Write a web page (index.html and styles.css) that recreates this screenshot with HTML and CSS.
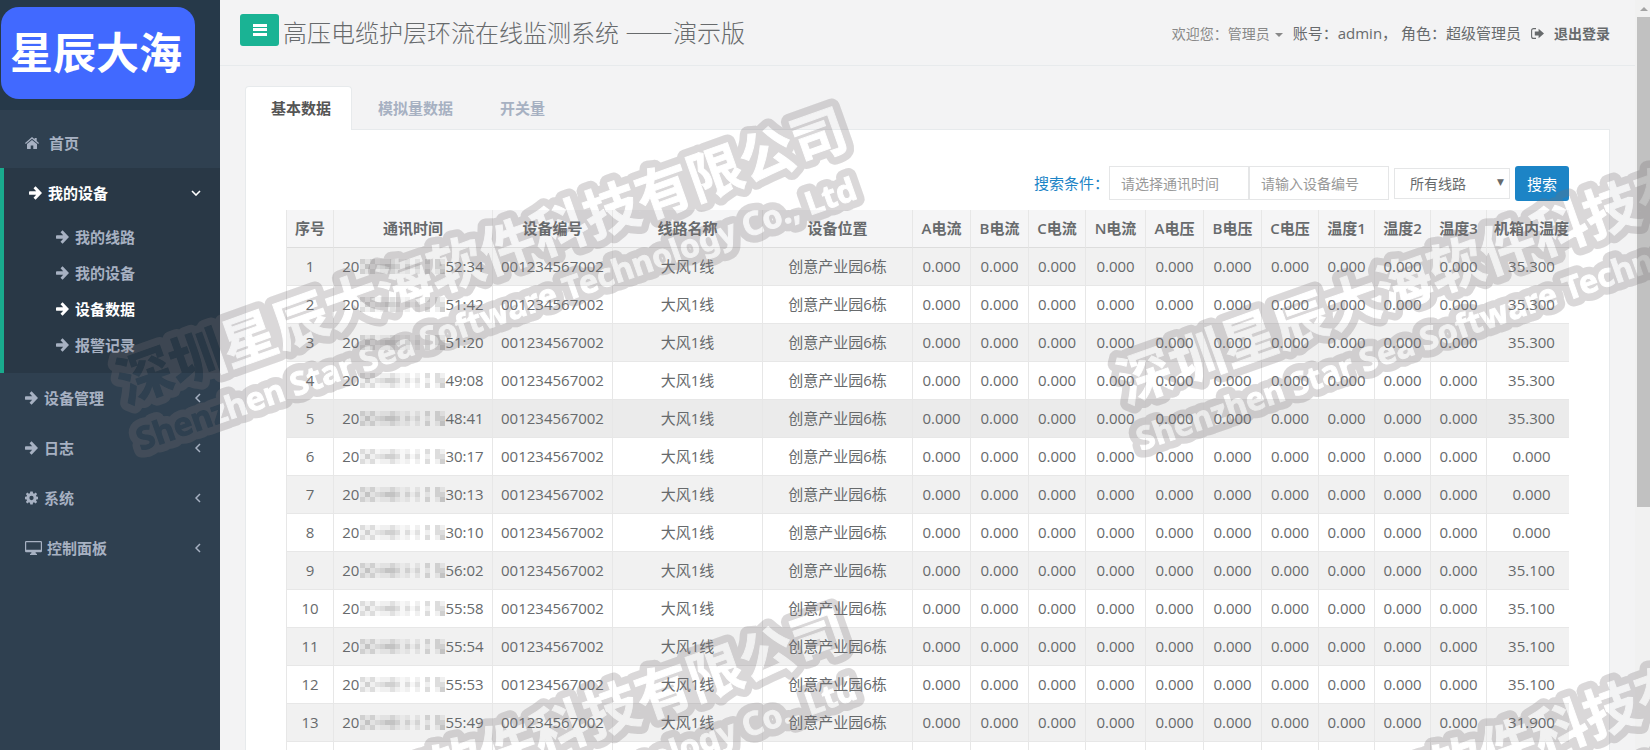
FILE: index.html
```html
<!DOCTYPE html>
<html lang="zh-CN">
<head>
    <meta charset="UTF-8">
    <meta name="viewport" content="width=device-width, initial-scale=1.0">
    <title>高压电缆护层环流在线监测系统</title>
    <link rel="stylesheet" href="styles.css">
</head>
<body>
    <!-- Icon sprite -->
    <svg class="sprite" aria-hidden="true">
        <symbol id="i-home" viewBox="0 0 14 12">
            <path d="M7 0 L9.6 2.2 V.9 H11.7 V4 L14 6 L13.2 6.9 L7 1.7 L.8 6.9 L0 6 Z"/>
            <path d="M7 2.9 L12 7.1 V11.4 Q12 12 11.4 12 H8.3 V8.5 H5.7 V12 H2.6 Q2 12 2 11.4 V7.1 Z"/>
        </symbol>
        <symbol id="i-arrow" viewBox="0 0 13 14">
            <path d="M6.6 .3 L13 7 L6.6 13.7 L4.5 11.7 L7.2 8.8 H.9 Q0 8.8 0 7.9 V6.1 Q0 5.2 .9 5.2 H7.2 L4.5 2.3 Z"/>
        </symbol>
        <symbol id="i-cog" viewBox="0 0 14 14">
            <path fill-rule="evenodd" d="M5.7 0 H8.3 L8.7 2 L9.8 2.4 L11.5 1.2 L13 2.8 L11.8 4.5 L12.2 5.4 L14 5.7 V8.3 L12.2 8.6 L11.8 9.5 L13 11.2 L11.4 12.8 L9.7 11.7 L8.6 12.1 L8.3 14 H5.7 L5.3 12.1 L4.2 11.7 L2.5 12.8 L1 11.2 L2.2 9.5 L1.8 8.6 L0 8.3 V5.7 L1.8 5.4 L2.2 4.5 L1 2.8 L2.5 1.2 L4.2 2.4 L5.3 2 Z M7 4.7 A2.3 2.3 0 1 0 7 9.3 A2.3 2.3 0 1 0 7 4.7 Z"/>
        </symbol>
        <symbol id="i-desktop" viewBox="0 0 17 14">
            <path fill-rule="evenodd" d="M1.2 0 H15.8 Q17 0 17 1.2 V10 Q17 11.2 15.8 11.2 H10.5 L11 12.8 H12 V14 H5 V12.8 H6 L6.5 11.2 H1.2 Q0 11.2 0 10 V1.2 Q0 0 1.2 0 Z M1.2 1.2 V8.8 H15.8 V1.2 Z"/>
        </symbol>
        <symbol id="i-left" viewBox="0 0 6 10">
            <path d="M5 1 L1 5 L5 9" fill="none" stroke="currentColor" stroke-width="1.5"/>
        </symbol>
        <symbol id="i-down" viewBox="0 0 10 6">
            <path d="M1 1 L5 5 L9 1" fill="none" stroke="currentColor" stroke-width="1.6"/>
        </symbol>
        <symbol id="i-bars" viewBox="0 0 14 12">
            <path d="M0 0 H14 V3 H0 Z M0 4 H14 V7 H0 Z M0 9 H14 V12 H0 Z"/>
        </symbol>
        <symbol id="i-caret" viewBox="0 0 8 4">
            <path d="M0 0 H8 L4 4 Z"/>
        </symbol>
        <symbol id="i-signout" viewBox="0 0 13 11">
            <path d="M5 .6 H2.6 Q.6 .6 .6 2.6 V8.4 Q.6 10.4 2.6 10.4 H5" fill="none" stroke="currentColor" stroke-width="1.1"/>
            <path d="M7.6 .8 L13 5.5 L7.6 10.2 V7.5 H3.8 V3.5 H7.6 Z"/>
        </symbol>
        <!-- Pixelated part of the timestamp, 5px blocks -->
        <symbol id="mosaic" viewBox="0 0 85 15">
            <g fill="#000">
                <path opacity=".06" d="M0 0 H15 V15 H0 Z M20 0 H40 V15 H20 Z M45 0 H50 V15 H45 Z M55 0 H60 V15 H55 Z M65 0 H70 V15 H65 Z M75 0 H85 V15 H75 Z"/>
                <path opacity=".08" d="M0 0 H5 V5 H0 Z M10 0 H15 V5 H10 Z M5 5 H10 V10 H5 Z M0 10 H5 V15 H0 Z M10 10 H15 V15 H10 Z M15 5 H40 V10 H15 Z M45 5 H50 V10 H45 Z M65 0 H70 V5 H65 Z M65 10 H70 V15 H65 Z M75 0 H80 V10 H75 Z M80 5 H85 V15 H80 Z"/>
                <path opacity=".06" d="M5 5 H10 V10 H5 Z M30 0 H35 V15 H30 Z M25 5 H35 V10 H25 Z M55 5 H60 V10 H55 Z M80 10 H85 V15 H80 Z"/>
                <path opacity=".03" d="M15 0 H20 V15 H15 Z M40 0 H45 V15 H40 Z M50 5 H55 V10 H50 Z"/>
            </g>
        </symbol>
    </svg>

    <!-- Sidebar -->
    <nav class="sidebar">
        <div class="logo-box">
            <div class="logo">星辰大海</div>
        </div>
        <ul class="menu">
            <li><a href="#"><svg class="icon icon-home"><use href="#i-home"/></svg>首页</a></li>
            <li class="active">
                <a href="#"><svg class="icon"><use href="#i-arrow"/></svg>我的设备<svg class="chevron-down"><use href="#i-down"/></svg></a>
                <ul class="submenu">
                    <li><a href="#"><svg class="icon"><use href="#i-arrow"/></svg>我的线路</a></li>
                    <li><a href="#"><svg class="icon"><use href="#i-arrow"/></svg>我的设备</a></li>
                    <li class="current"><a href="#"><svg class="icon"><use href="#i-arrow"/></svg>设备数据</a></li>
                    <li><a href="#"><svg class="icon"><use href="#i-arrow"/></svg>报警记录</a></li>
                </ul>
            </li>
            <li><a href="#"><svg class="icon"><use href="#i-arrow"/></svg>设备管理<svg class="chevron"><use href="#i-left"/></svg></a></li>
            <li><a href="#"><svg class="icon"><use href="#i-arrow"/></svg>日志<svg class="chevron"><use href="#i-left"/></svg></a></li>
            <li><a href="#"><svg class="icon"><use href="#i-cog"/></svg>系统<svg class="chevron"><use href="#i-left"/></svg></a></li>
            <li><a href="#"><svg class="icon icon-desktop"><use href="#i-desktop"/></svg>控制面板<svg class="chevron"><use href="#i-left"/></svg></a></li>
        </ul>
    </nav>

    <!-- Page content -->
    <main class="page">
        <header class="topbar">
            <button class="toggle-btn" type="button" aria-label="菜单"><svg><use href="#i-bars"/></svg></button>
            <h1>高压电缆护层环流在线监测系统<span class="demo">——演示版</span></h1>
            <div class="user-info">
                <a class="welcome" href="#">欢迎您：管理员<svg class="caret"><use href="#i-caret"/></svg></a>
                <span class="account">账号：admin， 角色：超级管理员</span>
                <a class="logout" href="#"><svg><use href="#i-signout"/></svg>退出登录</a>
            </div>
        </header>

        <section class="content">
            <div class="tabs">
                <a class="tab tab-active" href="#">基本数据</a>
                <a class="tab" href="#">模拟量数据</a>
                <a class="tab" href="#">开关量</a>
            </div>
            <div class="panel">
                <form class="search">
                    <label class="search-label" for="time">搜索条件：</label>
                    <input type="text" id="time" placeholder="请选择通讯时间">
                    <input type="text" id="device" placeholder="请输入设备编号" aria-label="设备编号">
                    <div class="select-box">
                        <select id="line" aria-label="线路">
                            <option>所有线路</option>
                        </select>
                    </div>
                    <button class="search-btn" type="button">搜索</button>
                </form>
                <div class="table-box">
                    <table>
                        <thead>
                            <tr>
                                <th class="w-no">序号</th>
                                <th class="w-time">通讯时间</th>
                                <th class="w-code">设备编号</th>
                                <th class="w-name">线路名称</th>
                                <th class="w-name">设备位置</th>
                                <th class="w-mid">A电流</th>
                                <th class="w-mid">B电流</th>
                                <th class="w-c">C电流</th>
                                <th class="w-wide">N电流</th>
                                <th class="w-mid">A电压</th>
                                <th class="w-mid">B电压</th>
                                <th class="w-c">C电压</th>
                                <th class="w-temp">温度1</th>
                                <th class="w-temp">温度2</th>
                                <th class="w-temp">温度3</th>
                                <th class="w-box">机箱内温度</th>
                            </tr>
                        </thead>
                        <tbody id="rows"></tbody>
                    </table>
                </div>
            </div>
        </section>
    </main>

    <div class="scrollbar">
        <svg class="scroll-up"><use href="#i-caret"/></svg>
        <div class="scroll-thumb"></div>
    </div>

    <!-- Watermark: outlined text with the letters cut out -->
    <svg class="watermark" aria-hidden="true">
        <defs>
            <g id="mark">
                <g transform="rotate(-19.6 126 404)">
                    <text class="mark-cn" x="126" y="404">深圳星辰大海软件科技有限公司</text>
                </g>
                <g transform="rotate(-19.4 141 451)">
                    <text class="mark-en" x="141" y="451">Shenzhen Star Sea Software Technology Co., Ltd</text>
                </g>
            </g>
            <g id="marks">
                <use href="#mark"/>
                <use href="#mark" x="1000"/>
                <use href="#mark" y="500"/>
                <use href="#mark" x="1000" y="500"/>
            </g>
            <mask id="cutout" maskUnits="userSpaceOnUse" x="0" y="0" width="100%" height="100%">
                <use class="mark-outline" href="#marks"/>
                <use class="mark-letters" href="#marks"/>
            </mask>
        </defs>
        <rect width="100%" height="100%" mask="url(#cutout)"/>
    </svg>

    <script>
        const data = [
            ['52:34', '35.300'], ['51:42', '35.300'], ['51:20', '35.300'], ['49:08', '35.300'],
            ['48:41', '35.300'], ['30:17', '0.000'], ['30:13', '0.000'], ['30:10', '0.000'],
            ['56:02', '35.100'], ['55:58', '35.100'], ['55:54', '35.100'], ['55:53', '35.100'],
            ['55:49', '31.900'], ['55:45', '31.900']
        ];

        // Build the table rows
        document.getElementById('rows').innerHTML = data.map(([time, temp], i) => `
            <tr class="${i === 4 ? 'hover' : ''}">
                <td>${i + 1}</td>
                <td><div class="time"><span>20</span><svg><use href="#mosaic"/></svg><span>${time}</span></div></td>
                <td>001234567002</td>
                <td>大风1线</td>
                <td>创意产业园6栋</td>
                ${'<td>0.000</td>'.repeat(10)}
                <td>${temp}</td>
            </tr>`).join('');
    </script>
</body>
</html>
```
FILE: styles.css
```css
* {
    box-sizing: border-box;
}

body {
    margin: 0;
    display: flex;
    height: 100vh;
    overflow: hidden;
    font-family: "Open Sans", "Noto Sans CJK SC", sans-serif;
    font-size: 15px;
    line-height: 21px;
    color: #676a6c;
    background: #f3f3f4;
}

a {
    color: inherit;
    text-decoration: none;
}

ul {
    list-style: none;
    margin: 0;
    padding: 0;
}

svg {
    fill: currentColor;
    flex: none;
}

.sprite {
    position: absolute;
    width: 0;
    height: 0;
}

/* Sidebar */
.sidebar {
    flex: none;
    width: 220px;
    background: #2f4050;
    color: #a7b1c2;
    font-weight: 600;
}

.logo-box {
    padding: 7px 25px 11px 1px;
    background: #263949;
}

.logo {
    height: 92px;
    padding-right: 4px;
    border-radius: 18px;
    background: #4169ff;
    color: #fff;
    font-size: 43px;
    font-weight: 700;
    line-height: 92px;
    text-align: center;
}

.menu {
    padding-top: 8px;
}

.menu a {
    display: flex;
    align-items: center;
    height: 50px;
    padding: 0 19px 0 25px;
}

.icon {
    width: 13px;
    height: 14px;
    margin-right: 6px;
}

.icon-home {
    width: 14px;
    height: 12px;
    margin-right: 10px;
}

.icon-desktop {
    width: 17px;
    margin-right: 5px;
}

.chevron {
    width: 6px;
    height: 10px;
    margin-left: auto;
}

.chevron-down {
    width: 10px;
    height: 6px;
    margin-left: auto;
}

.menu .active {
    padding-bottom: 10px;
    border-left: 4px solid #19aa8d;
    background: #293846;
}

.active > a,
.current {
    color: #fff;
}

.submenu {
    padding-top: 1px;
}

.submenu a {
    height: 36px;
    padding-left: 52px;
}

/* Top bar */
.page {
    flex: 1;
    display: flex;
    flex-direction: column;
    min-width: 0;
}

.topbar {
    display: flex;
    flex: none;
    align-items: flex-start;
    height: 66px;
    padding: 14px 25px 0 20px;
    border-bottom: 1px solid #e7eaec;
}

.toggle-btn {
    width: 39px;
    height: 32px;
    padding: 0;
    border: none;
    border-radius: 3px;
    background: #1ab394;
    color: #fff;
    line-height: 0;
}

.toggle-btn svg {
    width: 14px;
    height: 12px;
}

h1 {
    margin: 0 0 0 4px;
    font-size: 24px;
    font-weight: 300;
    line-height: 36px;
    white-space: nowrap;
}

.demo {
    margin-left: 6px;
    font-family: "Noto Sans CJK SC", sans-serif;
}

.user-info {
    display: flex;
    align-items: center;
    margin-left: auto;
    height: 38px;
    white-space: nowrap;
}

.welcome {
    color: #888;
    font-size: 14px;
}

.caret {
    width: 8px;
    height: 4px;
    margin: 0 10px 2px 5px;
}

.logout {
    display: flex;
    align-items: center;
    font-size: 14px;
    font-weight: 600;
}

.logout svg {
    width: 13px;
    height: 11px;
    margin: 0 10px;
}

/* Tabs */
.content {
    flex: 1;
    display: flex;
    flex-direction: column;
    min-height: 0;
    padding: 20px 25px 0;
}

.tabs {
    display: flex;
    flex: none;
}

.tab {
    height: 44px;
    padding: 11px 20px 10px 25px;
    border: 1px solid transparent;
    color: #a7b1c2;
    font-weight: 600;
}

.tab-active {
    position: relative;
    z-index: 1;
    border-color: #e7eaec;
    border-bottom: none;
    border-radius: 4px 4px 0 0;
    background: #fff;
    color: #555;
}

.panel {
    flex: 1;
    min-height: 0;
    margin-top: -1px;
    padding: 36px 40px 0;
    border: 1px solid #e7eaec;
    border-bottom: none;
    background: #fff;
    overflow: hidden;
}

/* Search form */
.search {
    display: flex;
    align-items: center;
    justify-content: flex-end;
    height: 34px;
    margin-bottom: 10px;
}

.search-label {
    color: #1c84c6;
}

.search input,
.search select {
    height: 34px;
    border: 1px solid #e5e6e7;
    background: #fff;
    color: inherit;
    font-family: inherit;
    font-size: 14px;
}

.search input {
    width: 140px;
    padding: 6px 11px;
}

.search input::placeholder {
    color: #999;
}

.select-box {
    position: relative;
    margin: 0 5px;
}

.search select {
    width: 116px;
    height: 31px;
    padding: 0 15px;
    appearance: none;
    display: block;
}

.select-box::after {
    content: "▼";
    position: absolute;
    top: 4px;
    right: 6px;
    font-family: "DejaVu Sans", sans-serif;
    font-size: 9px;
    pointer-events: none;
}

.search-btn {
    width: 54px;
    height: 35px;
    padding: 0;
    border: none;
    border-radius: 3px;
    background: #1c84c6;
    color: #fff;
    font-family: inherit;
    font-size: 15px;
}

/* Data table */
.table-box {
    overflow: hidden;
}

table {
    width: 100%;
    min-width: 1290px;
    table-layout: fixed;
    border-collapse: separate;
    border-spacing: 0;
    border-left: 1px solid #e7e7e7;
    text-align: center;
    white-space: nowrap;
}

th,
td {
    height: 38px;
    padding: 8px 0;
    border-right: 1px solid #e7e7e7;
    border-bottom: 1px solid #e7e7e7;
}

th {
    border-bottom-color: #ddd;
    background: #f5f5f6;
    font-weight: 600;
}

tbody tr:nth-child(odd) {
    background: #f1f1f1;
}

tbody .hover:nth-child(odd) {
    background: #ebebeb;
}

.w-no { width: 47px; }
.w-time { width: 159px; }
.w-code { width: 120px; }
.w-name { width: 150px; }
.w-mid { width: 58px; }
.w-c { width: 57px; }
.w-wide { width: 60px; }
.w-temp { width: 56px; }
.w-box { width: 90px; }

.time {
    display: flex;
    align-items: center;
    justify-content: center;
}

.time svg {
    width: 85px;
    height: 15px;
    margin-left: 1px;
}

/* Scrollbar */
.scrollbar {
    flex: none;
    width: 15px;
    padding-left: 2px;
    background: #f1f1f1;
    color: #a3a3a3;
    line-height: 0;
}

.scroll-up {
    width: 8px;
    height: 4px;
    margin: 7px 3px 6px;
    transform: rotate(180deg);
}

.scroll-thumb {
    height: 490px;
    background: #c1c1c1;
}

/* Watermark */
.watermark {
    position: fixed;
    top: 0;
    left: 0;
    width: 100%;
    height: 100%;
    color: #767073;
    opacity: 0.27;
    pointer-events: none;
    z-index: 10;
}

.mark-cn {
    font-family: "Noto Sans CJK SC", sans-serif;
    font-size: 55px;
    font-weight: 700;
}

.mark-en {
    font-family: "Noto Sans", sans-serif;
    font-size: 32px;
    font-weight: 700;
}

.mark-outline {
    fill: #fff;
    stroke: #fff;
    stroke-width: 16px;
    stroke-linejoin: round;
}

.mark-letters {
    fill: #000;
    stroke: #000;
    stroke-width: 1px;
}
```
